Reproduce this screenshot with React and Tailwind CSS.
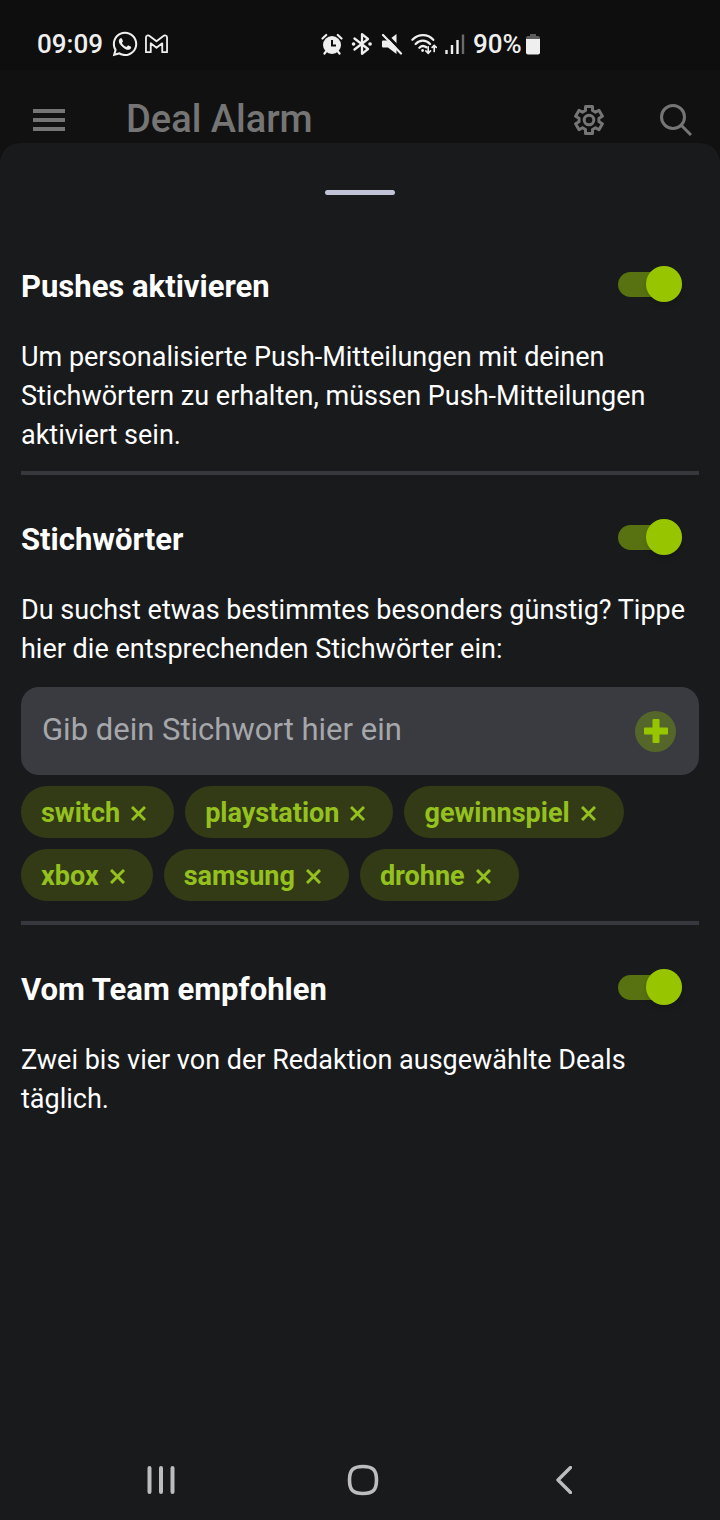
import React, { useState } from "react";
import { FaWhatsapp } from "react-icons/fa";

function StatusBar() {
  return (
    <div className="flex h-[70px] items-center bg-[#0e0e0e] pl-[37px] pt-[17px] text-[#efefef]">
      <span className="text-[26px] leading-8 font-medium">09:09</span>
      <FaWhatsapp className="ml-2 size-7" />
      <svg className="ml-1.5 h-5 w-[23px]" viewBox="0 0 24 20" fill="none" stroke="currentColor" strokeWidth="1.9" strokeLinejoin="round">
        <path d="M1 18.5V3.2C1 1 3.4.4 4.8 1.6L12 7.2l7.2-5.6C20.6.4 23 1 23 3.2V18.500h-5V9.300l-6 4.700-6-4.700v9.200z" />
      </svg>

      <div className="ml-[153px] flex items-center gap-2">
        <svg className="size-[22px]" viewBox="0 0 22 22" fill="none">
          <circle cx="11" cy="12" r="9" fill="currentColor" />
          <path d="M1.500 5.500l3.700-3.500M20.500 5.500l-3.700-3.500M5 18.500l-1.500 2M17 18.500l1.500 2" stroke="currentColor" strokeWidth="2.200" strokeLinecap="round" />
          <path d="M11 7v5.500h4" stroke="#0e0e0e" strokeWidth="2" />
        </svg>
        <svg className="size-[22px]" viewBox="0 0 22 22" fill="none" stroke="currentColor" strokeWidth="2.300" strokeLinecap="round" strokeLinejoin="round">
          <path d="M3.500 5.500l13.500 10.500-6 4.800V1.200l6 4.800-13.500 10.500" />
          <path d="M2.500 11h.1M19 11h.1" strokeWidth="3.600" />
        </svg>
        <svg className="size-[22px]" viewBox="0 0 22 22">
          <path d="M2 7.500h5L15.500 1v20L7 14.500H2a1 1 0 0 1-1-1v-5a1 1 0 0 1 1-1z" fill="currentColor" />
          <path d="M4.500 1l18 18.500" stroke="#0e0e0e" strokeWidth="3" />
          <path d="M2 2l18 18.500" stroke="currentColor" strokeWidth="2.200" strokeLinecap="round" />
        </svg>
        <svg className="h-[22px] w-[26px]" viewBox="0 0 28 22" fill="none" stroke="currentColor" strokeWidth="2.400" strokeLinecap="round">
          <path d="M1.500 6.500C8-.2 18-.2 24 6.500M5 11c4.500-4.700 11-4.700 15.500 0M9 15c2.500-2.400 5-2.400 7.500-.5" />
          <circle cx="12.500" cy="18" r="1.500" fill="currentColor" stroke="none" />
          <path d="M18.500 14v7m-2.500-2.500l2.500 2.500 2.500-2.500M25 19v-6.500m-2.200 2.200l2.200-2.200 2.200 2.200" strokeWidth="1.800" />
        </svg>
        <svg className="h-[22px] w-5" viewBox="0 0 20 22" fill="none" stroke="currentColor" strokeWidth="2.400">
          <path d="M1.500 21v-4M7 21V12M12.500 21V7" />
          <path d="M18 21V1.500" stroke="#6a6a6a" />
        </svg>
        <span className="flex items-center gap-1 text-[26px] leading-8 font-medium">
          90%
          <svg className="h-[22px] w-[14px]" viewBox="0 0 14 22">
            <path d="M4 1h6v2h2a2 2 0 0 1 2 2v3H0V5a2 2 0 0 1 2-2h2z" fill="#5c5c5c" />
            <path d="M0 6h14v13.500a2 2 0 0 1-2 2H2a2 2 0 0 1-2-2z" fill="currentColor" />
          </svg>
        </span>
      </div>
    </div>
  );
}

function AppBar() {
  return (
    <header className="flex h-[73px] items-center pl-7 pr-[23px] pt-[26px] text-[#757575]">
      <button aria-label="Menü" className="flex size-[42px] items-center justify-center">
        <svg className="h-6 w-8" viewBox="0 0 32 24" stroke="currentColor" strokeWidth="4">
          <path d="M0 3h32M0 12h32M0 21h32" />
        </svg>
      </button>
      <h1 className="ml-14 flex-1 pb-0.5 text-[38px] leading-[44px] font-medium">Deal Alarm</h1>
      <button aria-label="Einstellungen" className="flex size-[42px] items-center justify-center">
        <svg className="size-8" viewBox="-16 -16 32 32" fill="none" stroke="currentColor" strokeWidth="3" strokeLinejoin="round">
          <path d="M-3.500-13.500h7v4L6.480-7.780 9.940-9.780 13.440-3.720 9.980-1.720V1.720L13.440 3.720 9.940 9.780 6.480 7.780 3.500 9.500v4h-7v-4L-6.480 7.780-9.940 9.780-13.440 3.720-9.980 1.720V-1.720L-13.440-3.720-9.940-9.780-6.480-7.780-3.500-9.500z" />
          <circle r="4.800" />
        </svg>
      </button>
      <button aria-label="Suche" className="ml-[45px] flex size-[42px] items-center justify-center">
        <svg className="size-8" viewBox="0 0 32 32" fill="none" stroke="currentColor" strokeWidth="3">
          <circle cx="13" cy="13" r="11.500" />
          <path d="M21.500 21.500L31 31" />
        </svg>
      </button>
    </header>
  );
}

function Section({ id, title, text, children }) {
  const [on, setOn] = useState(true);

  return (
    <section>
      <div className="flex items-start justify-between pr-[17px]">
        <h2 id={id} className="text-[31px] leading-[42px] font-bold">{title}</h2>
        <label className="relative flex h-9 w-16 items-center">
          <input
            type="checkbox"
            role="switch"
            aria-labelledby={id}
            checked={on}
            onChange={() => setOn(!on)}
            className="peer sr-only"
          />
          <span className="h-[25px] w-full rounded-full bg-[#3a3b40] peer-checked:bg-[#587211]" />
          <span className="absolute left-0 size-9 rounded-full bg-[#8b8c91] shadow-md peer-checked:left-7 peer-checked:bg-[#97c600]" />
        </label>
      </div>
      <p className="mt-[30px] text-[27px] leading-[39px]">{text}</p>
      {children}
    </section>
  );
}

function Divider() {
  return <hr className="mt-4 mb-11 h-1 border-0 bg-[#37383d]" />;
}

function Keywords() {
  const [keywords, setKeywords] = useState(["switch", "playstation", "gewinnspiel", "xbox", "samsung", "drohne"]);
  const [value, setValue] = useState("");

  const addKeyword = (e) => {
    e.preventDefault();
    const word = value.trim();
    if (!word || keywords.includes(word)) return;
    setKeywords([...keywords, word]);
    setValue("");
  };

  return (
    <>
      <form onSubmit={addKeyword} className="mt-[18px] flex h-[88px] items-center rounded-[18px] bg-[#3a3b40] pl-[21px] pr-[23px]">
        <input
          type="text"
          aria-label="Stichwort"
          placeholder="Gib dein Stichwort hier ein"
          value={value}
          onChange={(e) => setValue(e.target.value)}
          className="min-w-0 flex-1 bg-transparent pb-0.5 text-[31px] leading-10 outline-none placeholder:text-[#a6a7ab]"
        />
        <button aria-label="Hinzufügen" className="flex size-[41px] items-center justify-center rounded-full bg-[#55662b] text-[#97c600]">
          <svg className="size-6" viewBox="0 0 24 24" fill="currentColor">
            <path d="M9.500 0h5a1 1 0 0 1 1 1v7.500H23a1 1 0 0 1 1 1v5a1 1 0 0 1-1 1h-7.500V23a1 1 0 0 1-1 1h-5a1 1 0 0 1-1-1v-7.500H1a1 1 0 0 1-1-1v-5a1 1 0 0 1 1-1h7.500V1a1 1 0 0 1 1-1z" />
          </svg>
        </button>
      </form>
      <ul className="mt-[11px] flex flex-wrap gap-[11px] pb-1">
        {keywords.map((word) => (
          <li key={word} className="flex h-[52px] items-center rounded-full bg-[#323b16] pt-0.5 pl-5 pr-7 text-[27px] leading-8 font-bold text-[#95c11f]">
            {word}
            <button
              aria-label={`${word} entfernen`}
              onClick={() => setKeywords(keywords.filter((k) => k !== word))}
              className="ml-[11px] flex h-8 items-center"
            >
              <svg className="size-[15px]" viewBox="0 0 15 15" stroke="currentColor" strokeWidth="3">
                <path d="M1 1l13 13M14 1L1 14" />
              </svg>
            </button>
          </li>
        ))}
      </ul>
    </>
  );
}

function NavBar() {
  return (
    <nav className="flex h-20 items-center justify-between pl-[139px] pr-[134px] text-[#bdbdbd]">
      <button aria-label="Letzte Apps" className="flex size-11 items-center justify-center">
        <svg className="size-7" viewBox="0 0 28 28" stroke="currentColor" strokeWidth="4" strokeLinecap="round">
          <path d="M2.500 2v24M14 2v24M25.500 2v24" />
        </svg>
      </button>
      <button aria-label="Startseite" className="flex size-11 items-center justify-center">
        <svg className="size-8" viewBox="0 0 32 32" fill="none" stroke="currentColor" strokeWidth="3.600">
          <path d="M16 2.500c10 0 13.500 3.500 13.500 13.500S26 29.500 16 29.500 2.500 26 2.500 16 6 2.500 16 2.500z" />
        </svg>
      </button>
      <button aria-label="Zurück" className="flex size-11 items-center justify-center">
        <svg className="h-7 w-4" viewBox="0 0 16 28" fill="none" stroke="currentColor" strokeWidth="3.400" strokeLinecap="round" strokeLinejoin="round">
          <path d="M14.500 1.500L2 14l12.500 12.500" />
        </svg>
      </button>
    </nav>
  );
}

function App() {
  return (
    <div className="flex min-h-screen flex-col bg-[#111111] font-['Roboto',sans-serif] text-white">
      <StatusBar />
      <AppBar />
      <div className="flex flex-1 flex-col rounded-t-[20px] bg-[#191a1c]">
        <div className="mx-auto mt-[47px] h-[5px] w-[70px] rounded-full bg-[#c1c4d6]" />
        <main className="mt-[71px] flex-1 px-[21px]">
          <Section
            id="pushes"
            title="Pushes aktivieren"
            text="Um personalisierte Push-Mitteilungen mit deinen Stichwörtern zu erhalten, müssen Push-Mitteilungen aktiviert sein."
          />
          <Divider />
          <Section
            id="keywords"
            title="Stichwörter"
            text="Du suchst etwas bestimmtes besonders günstig? Tippe hier die entsprechenden Stichwörter ein:"
          >
            <Keywords />
          </Section>
          <Divider />
          <Section
            id="team"
            title="Vom Team empfohlen"
            text="Zwei bis vier von der Redaktion ausgewählte Deals täglich."
          />
        </main>
        <NavBar />
      </div>
    </div>
  );
}

export default App;
